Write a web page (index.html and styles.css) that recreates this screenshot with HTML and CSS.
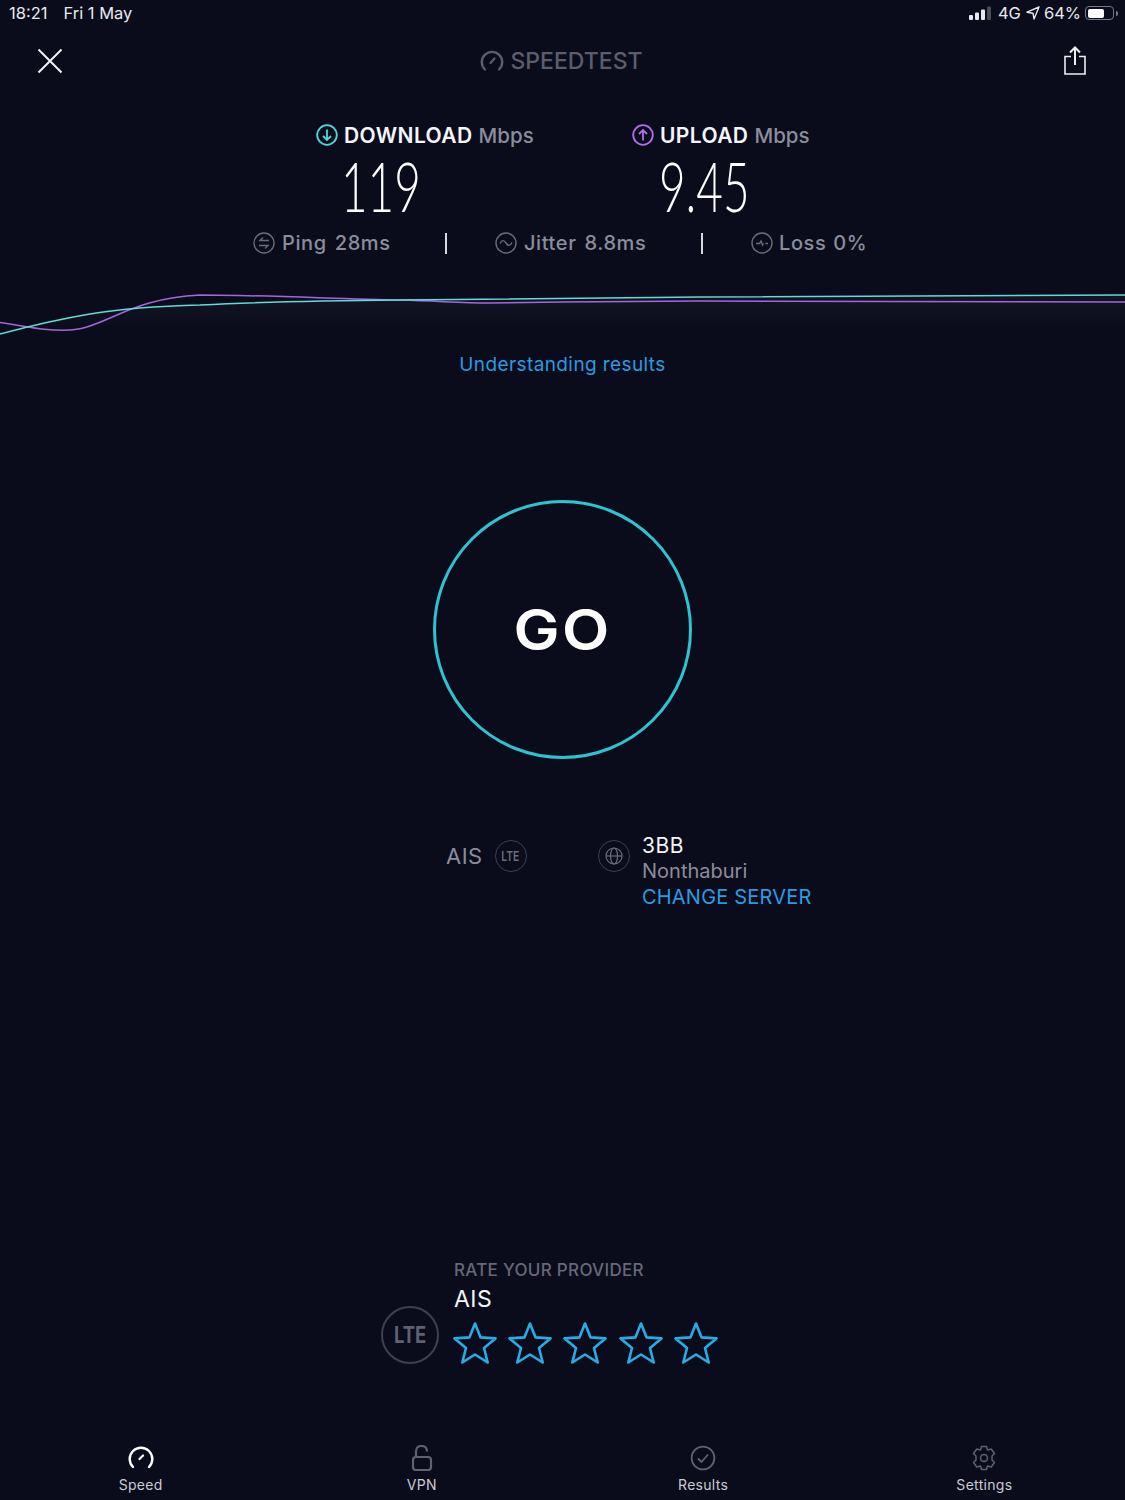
FILE: index.html
```html
<!DOCTYPE html>
<html lang="en">
<head>
    <meta charset="UTF-8">
    <title>Speedtest</title>
    <link rel="stylesheet" href="styles.css">
</head>
<body>
<div class="main">

    <div class="status">
        <span class="status-time">18:21</span>
        <span class="status-date">Fri 1 May</span>
        <div class="status-right">
            <svg class="signal" width="22" height="14" viewBox="0 0 22 14">
                <rect x="0" y="9" width="4" height="5" rx="1" fill="#e8e9ee"/>
                <rect x="6" y="6.500" width="4" height="7.500" rx="1" fill="#e8e9ee"/>
                <rect x="12" y="3.500" width="4" height="10.500" rx="1" fill="#e8e9ee"/>
                <rect x="18" y="0.500" width="4" height="13.500" rx="1" fill="#4a4c58"/>
            </svg>
            <span class="status-net">4G</span>
            <svg width="14" height="14" viewBox="0 0 14 14">
                <path d="M13 1 L1 6.200 L7 7.200 L8 13 Z" fill="none" stroke="#e8e9ee" stroke-width="1.400" stroke-linejoin="round"/>
            </svg>
            <span>64%</span>
            <div class="battery"><div class="battery-level"></div></div>
            <div class="battery-tip"></div>
        </div>
    </div>

    <div class="topbar">
        <svg width="26" height="26" viewBox="0 0 26 26">
            <path d="M1.500 1.500 L24.500 24.500 M24.500 1.500 L1.500 24.500" stroke="#f2f3f6" stroke-width="2"/>
        </svg>
        <div class="logo">
            <svg width="24" height="22" viewBox="0 0 24 22">
                <path d="M5 19.500 A10.200 10.200 0 1 1 19 19.500" fill="none" stroke="#5b5d6d" stroke-width="2.400" stroke-linecap="round"/>
                <path d="M10.500 13 L14.500 8.500" stroke="#5b5d6d" stroke-width="2.200" stroke-linecap="round"/>
            </svg>
            <span>SPEEDTEST</span>
        </div>
        <svg width="24" height="30" viewBox="0 0 24 30">
            <path d="M12 19 V2 M7 6.500 L12 1.500 L17 6.500" fill="none" stroke="#eceef2" stroke-width="2"/>
            <path d="M8 10.500 H2 V28 H22 V10.500 H16" fill="none" stroke="#eceef2" stroke-width="1.600"/>
        </svg>
    </div>

    <div class="results">
        <div class="result result-down">
            <div class="result-head">
                <svg width="22" height="22" viewBox="0 0 22 22">
                    <circle cx="11" cy="11" r="9.800" fill="none" stroke="#4fd8d8" stroke-width="1.800"/>
                    <path d="M11 5.500 V16 M7 12 L11 16 L15 12" fill="none" stroke="#4fd8d8" stroke-width="1.800"/>
                </svg>
                <b>DOWNLOAD</b> <span>Mbps</span>
            </div>
            <div class="result-value">119</div>
        </div>
        <div class="result result-up">
            <div class="result-head">
                <svg width="22" height="22" viewBox="0 0 22 22">
                    <circle cx="11" cy="11" r="9.800" fill="none" stroke="#b06fe8" stroke-width="1.800"/>
                    <path d="M11 16.500 V6 M7 10 L11 6 L15 10" fill="none" stroke="#b06fe8" stroke-width="1.800"/>
                </svg>
                <b>UPLOAD</b> <span>Mbps</span>
            </div>
            <div class="result-value">9.45</div>
        </div>
    </div>

    <div class="metrics">
        <div class="metric metric-ping">
            <svg width="22" height="22" viewBox="0 0 22 22">
                <circle cx="11" cy="11" r="10" fill="none" stroke="#6a6c7c" stroke-width="1.400"/>
                <path d="M16 8.500 H7 L10 5.500 M6 13.500 H15 L12 16.500" fill="none" stroke="#6a6c7c" stroke-width="1.400"/>
            </svg>
            <span>Ping</span>
            <span>28ms</span>
        </div>
        <div class="sep"></div>
        <div class="metric metric-jitter">
            <svg width="22" height="22" viewBox="0 0 22 22">
                <circle cx="11" cy="11" r="10" fill="none" stroke="#6a6c7c" stroke-width="1.400"/>
                <path d="M5 11.500 C7 7.500 9 8 11 11 C13 14 15 14.500 17 10.500" fill="none" stroke="#6a6c7c" stroke-width="1.400"/>
            </svg>
            <span>Jitter</span>
            <span>8.8ms</span>
        </div>
        <div class="sep"></div>
        <div class="metric metric-loss">
            <svg width="22" height="22" viewBox="0 0 22 22">
                <circle cx="11" cy="11" r="10" fill="none" stroke="#6a6c7c" stroke-width="1.400"/>
                <path d="M5 11.500 H8.500 L10 9 L11.500 13 L12.500 11.500 M14.500 11.500 H17" fill="none" stroke="#6a6c7c" stroke-width="1.400"/>
            </svg>
            <span>Loss</span>
            <span>0%</span>
        </div>
    </div>

    <svg class="chart" width="1125" height="60" viewBox="0 280 1125 60">
        <defs>
            <linearGradient id="glow" x1="0" y1="0" x2="0" y2="1">
                <stop offset="0" stop-color="#8f93c0" stop-opacity="0.06"/>
                <stop offset="1" stop-color="#8f93c0" stop-opacity="0"/>
            </linearGradient>
        </defs>
        <path d="M0 334 C60 318 100 310 200 305 C300 301 400 300 700 297 L1125 295 V325 H0 Z" fill="url(#glow)"/>
        <path d="M0 322.500 C30 327 45 331 70 330 C105 328 130 298 200 295 C260 295 340 299 400 300 C440 301 460 303 490 303 C560 302 640 301 700 301 C850 302 1000 303 1125 302" fill="none" stroke="#a566dc" stroke-width="1.500"/>
        <path d="M0 334 C30 326 60 319 90 314 C120 309 160 306 200 305 C260 302 340 300.500 400 300 C500 299 600 298 700 297 C850 296 1000 295 1125 295" fill="none" stroke="#5fdcd6" stroke-width="1.500"/>
    </svg>

    <div class="understanding">Understanding results</div>

    <div class="go-wrap">
        <div class="go"><span class="go-label">GO</span></div>
    </div>

    <div class="connection">
        <div class="provider">
            <span class="provider-name">AIS</span>
            <div class="ring"><span class="ring-label">LTE</span></div>
        </div>
        <div class="server">
            <div class="ring">
                <svg width="18" height="18" viewBox="0 0 18 18">
                    <g fill="none" stroke="#6a6c7c" stroke-width="1.200">
                        <circle cx="9" cy="9" r="8"/>
                        <ellipse cx="9" cy="9" rx="3.500" ry="8"/>
                        <path d="M1 9 H17"/>
                    </g>
                </svg>
            </div>
            <div class="server-text">
                <div class="server-name">3BB</div>
                <div class="server-city">Nonthaburi</div>
                <div class="server-change">CHANGE SERVER</div>
            </div>
        </div>
    </div>

    <div class="rate">
        <div class="ring ring-big"><span class="ring-label">LTE</span></div>
        <div class="rate-body">
            <div class="rate-title">RATE YOUR PROVIDER</div>
            <div class="rate-name">AIS</div>
            <div class="stars">
                <svg width="44" height="44" viewBox="0 0 44 44"><path class="star" d="M22 2.500 L27.600 16.400 L42.500 17.400 L31 27 L34.700 41.500 L22 33.500 L9.300 41.500 L13 27 L1.500 17.400 L16.400 16.400 Z"/></svg>
                <svg width="44" height="44" viewBox="0 0 44 44"><path class="star" d="M22 2.500 L27.600 16.400 L42.500 17.400 L31 27 L34.700 41.500 L22 33.500 L9.300 41.500 L13 27 L1.500 17.400 L16.400 16.400 Z"/></svg>
                <svg width="44" height="44" viewBox="0 0 44 44"><path class="star" d="M22 2.500 L27.600 16.400 L42.500 17.400 L31 27 L34.700 41.500 L22 33.500 L9.300 41.500 L13 27 L1.500 17.400 L16.400 16.400 Z"/></svg>
                <svg width="44" height="44" viewBox="0 0 44 44"><path class="star" d="M22 2.500 L27.600 16.400 L42.500 17.400 L31 27 L34.700 41.500 L22 33.500 L9.300 41.500 L13 27 L1.500 17.400 L16.400 16.400 Z"/></svg>
                <svg width="44" height="44" viewBox="0 0 44 44"><path class="star" d="M22 2.500 L27.600 16.400 L42.500 17.400 L31 27 L34.700 41.500 L22 33.500 L9.300 41.500 L13 27 L1.500 17.400 L16.400 16.400 Z"/></svg>
            </div>
        </div>
    </div>

    <div class="tabs">
        <div class="tab">
            <svg width="26" height="26" viewBox="0 0 26 26">
                <path d="M5 22 A11.300 11.300 0 1 1 21 22" fill="none" stroke="#ffffff" stroke-width="2.400" stroke-linecap="round"/>
                <path d="M11.500 14 L15 10.500" stroke="#ffffff" stroke-width="2.200" stroke-linecap="round"/>
            </svg>
            <span>Speed</span>
        </div>
        <div class="tab">
            <svg width="26" height="26" viewBox="0 0 26 26">
                <path d="M7 12 V6.500 C7 2 9.500 1 12.500 1 C15.500 1 18 2.500 18 6.500" fill="none" stroke="#5f6172" stroke-width="2.200"/>
                <rect x="4" y="12" width="18" height="13" rx="3" fill="none" stroke="#5f6172" stroke-width="2.200"/>
            </svg>
            <span>VPN</span>
        </div>
        <div class="tab">
            <svg width="26" height="26" viewBox="0 0 26 26">
                <circle cx="13" cy="13" r="11.400" fill="none" stroke="#5f6172" stroke-width="1.800"/>
                <path d="M8 13.500 L11.500 17 L18 9.500" fill="none" stroke="#5f6172" stroke-width="1.800"/>
            </svg>
            <span>Results</span>
        </div>
        <div class="tab">
            <svg width="26" height="26" viewBox="0 0 26 26">
                <g fill="none" stroke="#5f6172" stroke-width="1.500" stroke-linejoin="round">
                    <path d="M10.500 1.500 H15.500 L16.500 5 L20.200 4 L23.500 8.500 L21 11 V15 L23.500 17.500 L20.200 22 L16.500 21 L15.500 24.500 H10.500 L9.500 21 L5.800 22 L2.500 17.500 L5 15 V11 L2.500 8.500 L5.800 4 L9.500 5 Z"/>
                    <circle cx="13" cy="13" r="3.500"/>
                </g>
            </svg>
            <span>Settings</span>
        </div>
    </div>

</div>
</body>
</html>
```

FILE: styles.css
```css
body {
    margin: 0;
    background-color: #0a0c1b;
}

.main {
    width: 1125px;
    height: 1500px;
    display: flex;
    flex-direction: column;
    overflow: hidden;
    font-family: "Inter", "Noto Sans", sans-serif;
    color: #8b8d9c;
}

.status {
    height: 26px;
    display: flex;
    align-items: center;
    padding: 0 7px 0 9px;
    font-size: 16.500px;
    color: #e8e9ee;
}

.status-date {
    margin-left: 16px;
}

.status-right {
    margin-left: auto;
    display: flex;
    align-items: center;
    gap: 4px;
}

.status-net {
    margin: 0 1px 0 3px;
}

.battery {
    width: 24px;
    height: 9px;
    border: 1.500px solid #77798a;
    border-radius: 4px;
    padding: 1.500px;
    box-sizing: content-box;
}

.battery-level {
    width: 68%;
    height: 100%;
    background-color: #fff;
    border-radius: 2px;
}

.battery-tip {
    width: 2px;
    height: 5px;
    background-color: #77798a;
    margin-left: -2px;
    border-radius: 0 2px 2px 0;
}

.topbar {
    height: 69px;
    display: flex;
    align-items: center;
    justify-content: space-between;
    padding: 0 38px 0 37px;
}

.logo {
    display: flex;
    align-items: center;
    gap: 6px;
    font-size: 23px;
    font-weight: 500;
    color: #5b5d6d;
    margin-left: -3px;
}

.results {
    display: flex;
    margin-top: 24px;
    height: 104px;
    padding-left: 316px;
}

.result-down {
    width: 316px;
}

.result-head {
    display: flex;
    align-items: center;
    height: 32px;
    font-size: 21px;
    white-space: nowrap;
}

.result-head svg {
    margin-right: 6px;
}

.result-head b {
    font-weight: 600;
    letter-spacing: 0.400px;
    color: #f4f5f8;
    margin-right: 6px;
}

.result-head span {
    font-weight: 500;
    font-size: 20.500px;
}

.result-value {
    font-family: "Lato", "Roboto", sans-serif;
    font-weight: 300;
    font-size: 69.500px;
    line-height: 60px;
    color: #fff;
    width: 100px;
    margin-top: 4px;
    text-align: center;
    transform: scaleX(0.66);
}

.result-down .result-value {
    margin-left: 8px;
}

.result-up .result-value {
    margin-left: 10px;
}

.metrics {
    display: flex;
    align-items: center;
    height: 32px;
    margin-top: 4px;
    padding-left: 253px;
    font-size: 20px;
    font-weight: 500;
    letter-spacing: 0.600px;
    white-space: nowrap;
}

.metric {
    display: flex;
    align-items: center;
    gap: 8px;
}

.metric svg {
    margin-right: -1px;
}

.metric-ping {
    width: 192px;
}

.metric-jitter {
    width: 206px;
    margin-left: 48px;
}

.metric-loss {
    gap: 7px;
    margin-left: 48px;
}

.sep {
    width: 2px;
    height: 21px;
    background-color: #d8d9e0;
}

.chart {
    display: block;
    margin-top: 21px;
    flex: none;
}

.understanding {
    margin-top: 13px;
    text-align: center;
    font-size: 19px;
    letter-spacing: 0.400px;
    color: #2a9be0;
}

.go-wrap {
    display: flex;
    justify-content: center;
    margin-top: 124px;
}

.go {
    width: 253px;
    height: 253px;
    border: 3px solid #2cc3d2;
    border-radius: 50%;
    display: flex;
    align-items: center;
    justify-content: center;
    font-size: 56px;
    font-weight: 600;
    letter-spacing: 2px;
    color: #fff;
}

.go-label {
    transform: scaleX(1.1);
}

.connection {
    display: flex;
    margin-top: 73px;
    padding-left: 446px;
}

.provider {
    display: flex;
    align-items: center;
    align-self: flex-start;
    gap: 12px;
    width: 152px;
    margin-top: 8px;
    font-size: 22px;
    letter-spacing: 0.500px;
}

.ring {
    width: 30px;
    height: 30px;
    border: 1.500px solid #3e404f;
    border-radius: 50%;
    display: flex;
    align-items: center;
    justify-content: center;
    font-size: 13px;
    font-weight: 600;
    letter-spacing: 0;
    color: #6a6c7c;
    flex: none;
}

.ring-label {
    transform: scaleX(0.8);
}

.server {
    display: flex;
    gap: 12px;
}

.server .ring {
    margin-top: 8px;
}

.server-text {
    font-size: 20px;
    line-height: 26px;
}

.server-name {
    font-size: 21px;
    letter-spacing: 0.500px;
    padding-top: 1px;
    margin-bottom: -1px;
    color: #f4f5f8;
}

.server-change {
    letter-spacing: 0.200px;
    color: #2a9be0;
}

.rate {
    display: flex;
    margin-top: 350px;
    padding-left: 381px;
    gap: 15px;
}

.ring-big {
    width: 54px;
    height: 54px;
    border: 2.500px solid #3e404f;
    font-size: 23px;
    font-weight: 700;
    color: #5f6172;
    margin-top: 46px;
}

.rate-title {
    font-size: 17px;
    font-weight: 500;
    letter-spacing: 0.300px;
    color: #66687a;
}

.rate-name {
    font-size: 23px;
    letter-spacing: 0.500px;
    margin-top: 5px;
    color: #f4f5f8;
}

.stars {
    display: flex;
    gap: 11.200px;
    margin-top: 8px;
    margin-left: -1px;
}

.star {
    fill: none;
    stroke: #28ace8;
    stroke-width: 2.600;
    stroke-linejoin: round;
}

.tabs {
    display: grid;
    grid-template-columns: repeat(4, 1fr);
    margin-top: auto;
    height: 55px;
}

.tab {
    display: flex;
    flex-direction: column;
    align-items: center;
    gap: 5px;
    font-size: 14px;
    letter-spacing: 0.300px;
    color: #c9cad3;
}
```
